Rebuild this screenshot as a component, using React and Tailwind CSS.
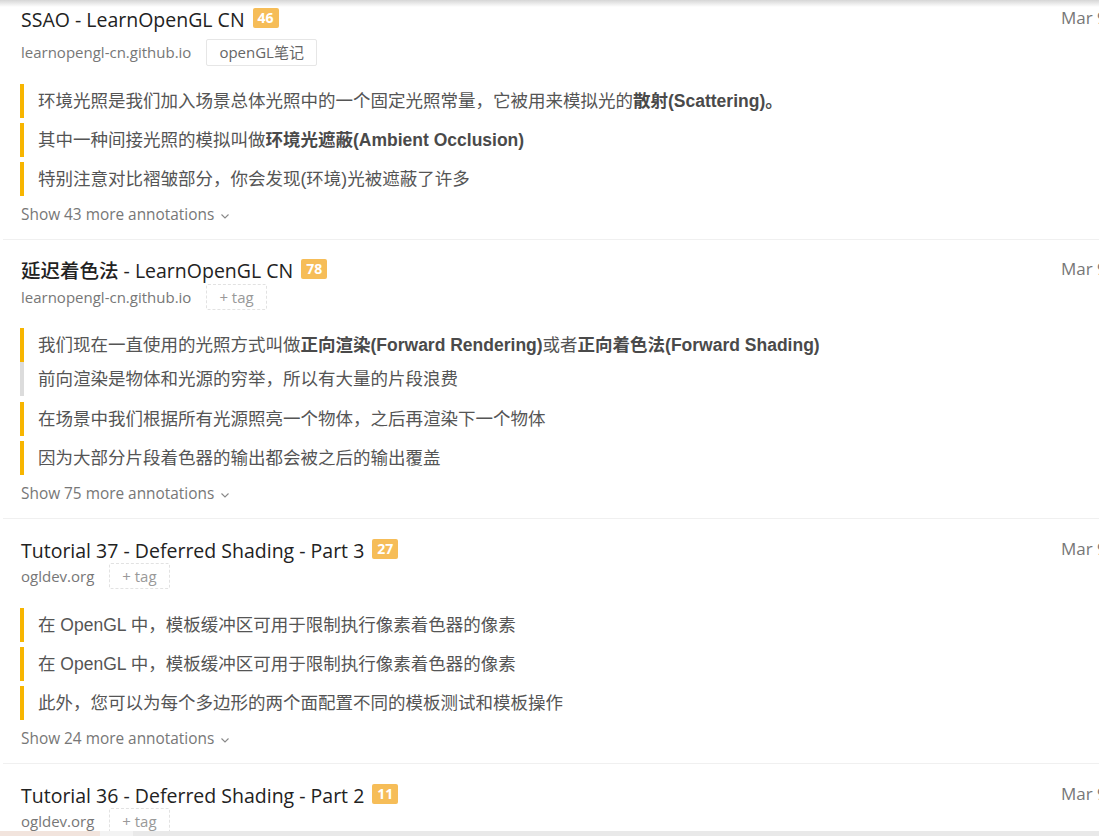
const cards = [
  {
    title: "SSAO - LearnOpenGL CN",
    count: 46,
    domain: "learnopengl-cn.github.io",
    tag: "openGL笔记",
    pt: "pt-[8px]",
    gap: "mt-[7px]",
    nt: "mt-[18px]",
    more: 43,
    notes: [
      { parts: ["环境光照是我们加入场景总体光照中的一个固定光照常量，它被用来模拟光的", { b: "散射(Scattering)。" }] },
      { parts: ["其中一种间接光照的模拟叫做", { b: "环境光遮蔽(Ambient Occlusion)" }] },
      { parts: ["特别注意对比褶皱部分，你会发现(环境)光被遮蔽了许多"] },
    ],
  },
  {
    title: "延迟着色法 - LearnOpenGL CN",
    count: 78,
    domain: "learnopengl-cn.github.io",
    pt: "pt-[19px]",
    gap: "mt-[1px]",
    nt: "mt-[18px]",
    more: 75,
    notes: [
      { parts: ["我们现在一直使用的光照方式叫做", { b: "正向渲染(Forward Rendering)" }, "或者", { b: "正向着色法(Forward Shading)" }], tight: true },
      { parts: ["前向渲染是物体和光源的穷举，所以有大量的片段浪费"], gray: true },
      { parts: ["在场景中我们根据所有光源照亮一个物体，之后再渲染下一个物体"] },
      { parts: ["因为大部分片段着色器的输出都会被之后的输出覆盖"] },
    ],
  },
  {
    title: "Tutorial 37 - Deferred Shading - Part 3",
    count: 27,
    domain: "ogldev.org",
    pt: "pt-[20px]",
    gap: "mt-0",
    nt: "mt-[19px]",
    more: 24,
    notes: [
      { parts: ["在 OpenGL 中，模板缓冲区可用于限制执行像素着色器的像素"] },
      { parts: ["在 OpenGL 中，模板缓冲区可用于限制执行像素着色器的像素"] },
      { parts: ["此外，您可以为每个多边形的两个面配置不同的模板测试和模板操作"] },
    ],
  },
  {
    title: "Tutorial 36 - Deferred Shading - Part 2",
    count: 11,
    domain: "ogldev.org",
    pt: "pt-[20px]",
    gap: "mt-0",
    nt: "mt-[18px]",
    more: 0,
    notes: [],
  },
];

const sans = "font-['Open_Sans','Noto_Sans_CJK_SC',sans-serif]";

function Note({ note, last }) {
  const bar = note.gray ? "border-[#dcdcdc]" : "border-[#f7b500]";
  const mb = last || note.tight ? "mb-0" : note.gray ? "mb-[6px]" : "mb-[5px]";
  return (
    <div className={`flex items-center border-l-4 ${bar} h-[34px] ${mb} pl-[14px] text-[17.5px] text-[#555] font-['Liberation_Sans','Noto_Sans_CJK_SC',sans-serif] whitespace-nowrap`}>
      {note.parts.map((p, i) =>
        typeof p === "string" ? <span key={i}>{p}</span> : <b key={i} className="font-bold text-[#4a4a4a]">{p.b}</b>
      )}
    </div>
  );
}

function Card({ c, last }) {
  return (
    <div className={`flex border-b border-[#f0f0f0] ${c.pt} ${last ? "pb-0" : "pb-[14px]"} pl-[18px]`}>
      <div className="w-[1040px] shrink-0">
        <div className="flex items-center h-[24px]">
          <span className={`${sans} text-[19.5px] font-medium text-[#222] leading-[24px] whitespace-nowrap`}>{c.title}</span>
          <span className="ml-[8px] mt-[-5px] h-[20px] flex items-center bg-[#f6bd58] text-white text-[14px] font-bold font-['Open_Sans',sans-serif] rounded-[2px] px-[5px]">
            {c.count}
          </span>
        </div>
        <div className={`flex items-center ${c.gap}`}>
          <span className={`${sans} text-[15px] text-[#777]`}>{c.domain}</span>
          {c.tag ? (
            <span className={`ml-[15px] h-[27px] flex items-center px-[12px] border border-[#e6e6e6] rounded-[2px] ${sans} text-[15px] text-[#666]`}>
              {c.tag}
            </span>
          ) : (
            <span className={`ml-[15px] h-[26px] flex items-center px-[12px] border border-dashed border-[#e2e2e2] rounded-[2px] ${sans} text-[15px] text-[#999]`}>
              + tag
            </span>
          )}
        </div>
        {c.notes.length > 0 && (
          <div className={`${c.nt} ml-[-1px]`}>
            {c.notes.map((n, i) => (
              <Note key={i} note={n} last={i === c.notes.length - 1} />
            ))}
          </div>
        )}
        {c.more > 0 && (
          <div className={`mt-[9px] flex items-center gap-[7px] ${sans} text-[15.4px] leading-[20px] text-[#777]`}>
            Show {c.more} more annotations
            <svg width="8" height="5" viewBox="0 0 8 5" className="mt-[2px]">
              <polyline points="0.5,0.5 4,4 7.5,0.5" fill="none" stroke="#888" strokeWidth="1.1" />
            </svg>
          </div>
        )}
      </div>
      <div className={`shrink-0 ${sans} text-[17px] leading-[20px] text-[#777] whitespace-nowrap`}>Mar 9, 2019</div>
    </div>
  );
}

export default function App() {
  return (
    <div className="relative w-[1099px] h-[836px] overflow-hidden bg-white">
      <div className="pl-[3px] w-[1300px]">
        {cards.map((c, i) => (
          <Card key={i} c={c} last={i === cards.length - 1} />
        ))}
      </div>
      <div className="absolute top-0 left-0 right-0 h-[7px] bg-gradient-to-b from-[#d6d6d6] to-transparent" />
      <div className="absolute bottom-0 left-0 right-0 h-[5px] flex">
        <div className="w-[100px] bg-[#f2e4dd]" />
        <div className="w-[33px] bg-[#f3f3f3]" />
        <div className="flex-1 bg-[#e9e9e9]" />
      </div>
    </div>
  );
}
